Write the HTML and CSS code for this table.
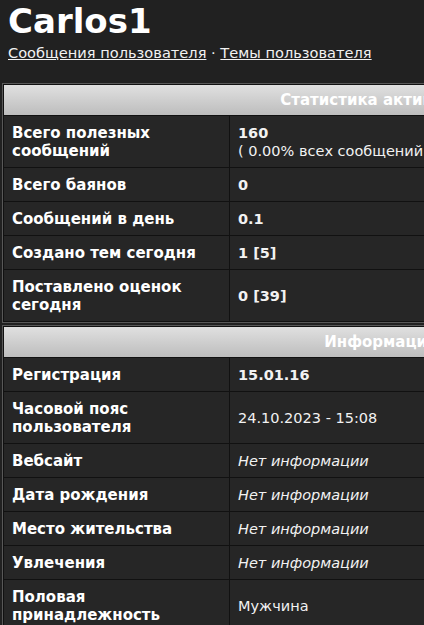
FILE: index.html
```html
<!DOCTYPE html>
<html lang="ru">
<head>
<meta charset="utf-8">
<title>Carlos1</title>
<link rel="stylesheet" href="styles.css">
</head>
<body>
<div class="page">
  <div class="head">
    <h1 class="name">Carlos1</h1>
    <div class="links"><a href="#">Сообщения пользователя</a> · <a href="#">Темы пользователя</a></div>
  </div>
  <table class="tbl">
    <tr><th colspan="2">Статистика активности</th></tr>
    <tr><td class="lbl">Всего полезных сообщений</td><td class="val"><b>160</b><br>( 0.00% всех сообщений )</td></tr>
    <tr><td class="lbl">Всего баянов</td><td class="val"><b>0</b></td></tr>
    <tr><td class="lbl">Сообщений в день</td><td class="val"><b>0.1</b></td></tr>
    <tr><td class="lbl">Создано тем сегодня</td><td class="val"><b>1 [5]</b></td></tr>
    <tr><td class="lbl">Поставлено оценок сегодня</td><td class="val"><b>0 [39]</b></td></tr>
  </table>
  <table class="tbl">
    <tr><th colspan="2">Информация</th></tr>
    <tr><td class="lbl">Регистрация</td><td class="val"><b>15.01.16</b></td></tr>
    <tr><td class="lbl">Часовой пояс пользователя</td><td class="val">24.10.2023 - 15:08</td></tr>
    <tr><td class="lbl">Вебсайт</td><td class="val"><i>Нет информации</i></td></tr>
    <tr><td class="lbl">Дата рождения</td><td class="val"><i>Нет информации</i></td></tr>
    <tr><td class="lbl">Место жительства</td><td class="val"><i>Нет информации</i></td></tr>
    <tr><td class="lbl">Увлечения</td><td class="val"><i>Нет информации</i></td></tr>
    <tr><td class="lbl">Половая принадлежность</td><td class="val">Мужчина</td></tr>
  </table>
</div>
</body>
</html>
```

FILE: styles.css
```css
html, body {
  margin: 0;
  padding: 0;
  background: #212121;
  color: #f2f2f2;
  font-family: "DejaVu Sans", Verdana, sans-serif;
}
.page {
  width: 100%;
  overflow: hidden;
  padding-top: 2px;
}
.head {
  padding: 0 8px;
}
.name {
  margin: 0;
  font-size: 34px;
  line-height: 38px;
  font-weight: bold;
  color: #fff;
}
.links {
  font-size: 14.6px;
  line-height: 17px;
  margin-top: 4px;
  margin-bottom: 22px;
}
.links a {
  color: #f2f2f2;
  text-decoration: underline;
}
.tbl {
  width: 757px;
  margin-left: 2px;
  margin-bottom: 2px;
  border: 1px solid #585858;
  border-spacing: 1px;
  background: #111;
  font-size: 14.5px;
  line-height: 18px;
}
.tbl th {
  background: linear-gradient(#e0e0e0, #bdbdbd);
  color: #fff;
  font-size: 15px;
  font-weight: bold;
  height: 30px;
  padding: 0;
  text-align: center;
}
.tbl td {
  background: #262626;
  padding: 8px 8px 7px;
  vertical-align: middle;
  text-align: left;
}
.tbl td.lbl {
  width: 209px;
  font-size: 15px;
  font-weight: bold;
  color: #fff;
}
.tbl td.val {
  color: #f2f2f2;
}
```
